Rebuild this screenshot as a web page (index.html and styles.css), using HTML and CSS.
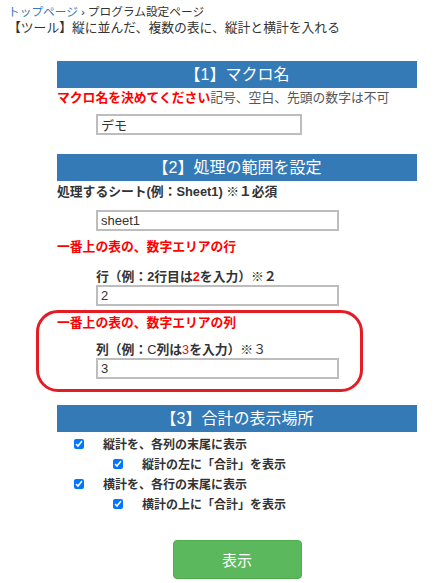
FILE: index.html
```html
<!DOCTYPE html>
<html lang="ja">
<head>
  <meta charset="UTF-8">
  <meta name="viewport" content="width=device-width, initial-scale=1.0">
  <title>プログラム設定ページ</title>
  <link rel="stylesheet" href="styles.css">
</head>
<body>
  <div class="top">
    <div class="crumbs"><a href="#">トップページ</a><span class="sep">›</span>プログラム設定ページ</div>
    <div class="title">【ツール】縦に並んだ、複数の表に、縦計と横計を入れる</div>
  </div>

  <form class="page">
    <h2 class="sec-head">【1】マクロ名</h2>
    <p class="note"><b class="red">マクロ名を決めてください</b>記号、空白、先頭の数字は不可</p>
    <div class="field first">
      <input type="text" class="txt short" value="デモ">
    </div>

    <h2 class="sec-head sec2">【2】処理の範囲を設定</h2>
    <p class="label">処理するシート(例：Sheet1) ※１必須</p>
    <div class="field sheet">
      <input type="text" class="txt" value="sheet1">
    </div>
    <p class="label red area">一番上の表の、数字エリアの行</p>
    <p class="label sub">行（例：2行目は<span class="red">2</span>を入力）※２</p>
    <div class="field">
      <input type="text" class="txt" value="2">
    </div>

    <div class="mark">
      <p class="label red">一番上の表の、数字エリアの列</p>
      <p class="label sub">列（例：<span class="thin">C</span>列は<span class="red thin">3</span>を入力）※<span class="thin">３</span></p>
      <div class="field">
        <input type="text" class="txt" value="3">
      </div>
    </div>

    <h2 class="sec-head sec3">【3】合計の表示場所</h2>
    <div class="checks">
      <label class="chk"><input type="checkbox" checked><span>縦計を、各列の末尾に表示</span></label>
      <label class="chk lv2"><input type="checkbox" checked><span>縦計の左に「合計」を表示</span></label>
      <label class="chk"><input type="checkbox" checked><span>横計を、各行の末尾に表示</span></label>
      <label class="chk lv2"><input type="checkbox" checked><span>横計の上に「合計」を表示</span></label>
    </div>

    <div class="actions">
      <button type="button" class="btn-go">表示</button>
    </div>
  </form>
</body>
</html>
```

FILE: styles.css
```css
body {
  margin: 0;
  padding: 0;
  font-family: "Liberation Sans", "Noto Sans CJK JP", sans-serif;
  color: #333;
}

/* breadcrumb and page title */
.top {
  padding: 4px 8px 0;
}

.crumbs {
  font-size: 11.7px;
  line-height: 16px;
}

.crumbs a {
  color: #337ab7;
  text-decoration: none;
}

.crumbs .sep {
  margin: 0 3px;
}

.title {
  font-size: 12.8px;
  line-height: 16px;
}

/* form body */
.page {
  margin: 25px 0 0 57px;
  width: 360px;
}

.sec-head {
  margin: 0;
  height: 27px;
  line-height: 27px;
  background: #337ab7;
  color: #fff;
  font-size: 16px;
  font-weight: normal;
  text-align: center;
}

.sec2 {
  margin-top: 19px;
}

.sec3 {
  margin-top: 13px;
}

.note {
  margin: 1px 0 0;
  font-size: 12.8px;
  line-height: 17px;
  color: #555;
  white-space: nowrap;
}

.red {
  color: #f00;
}

.thin {
  font-weight: normal;
}

.label {
  margin: 2px 0 0;
  font-size: 12.8px;
  line-height: 17px;
  font-weight: bold;
  white-space: nowrap;
}

.label.area {
  margin-top: 7px;
}

.label.sub {
  margin: 13px 0 0 39px;
}

.field {
  margin-left: 39px;
}

.field.first {
  margin-top: 8px;
}

.field.sheet {
  margin-top: 10px;
}

.txt {
  display: block;
  box-sizing: border-box;
  width: 243px;
  height: 21px;
  margin: 0;
  padding: 0 3px;
  border: 2px solid #bdbdbd;
  font-family: "Liberation Sans", "Noto Sans CJK JP", sans-serif;
  font-size: 13px;
  color: #333;
}

.txt.short {
  width: 206px;
}

/* red highlight around the column setting */
.mark {
  margin: 4px 0 0 -21px;
  width: 327px;
  box-sizing: border-box;
  padding: 0 0 10px 18px;
  border: 3px solid #e41c24;
  border-radius: 22px;
}

.mark .label {
  margin-top: 1px;
}

.mark .label.sub {
  margin-top: 10px;
}

/* checkboxes */
.checks {
  margin-top: 1px;
}

.chk {
  display: flex;
  align-items: center;
  height: 20px;
  padding-left: 17px;
  font-size: 12px;
  font-weight: bold;
}

.chk.lv2 {
  padding-left: 56px;
}

.chk input {
  width: 10px;
  height: 10px;
  margin: 2px 19px 0 0;
}

.actions {
  margin-top: 27px;
  text-align: center;
}

.btn-go {
  width: 129px;
  height: 39px;
  background: #5cb85c;
  border: 1px solid #4cae4c;
  border-radius: 4px;
  color: #fff;
  font-family: "Liberation Sans", "Noto Sans CJK JP", sans-serif;
  font-size: 15px;
}
```
